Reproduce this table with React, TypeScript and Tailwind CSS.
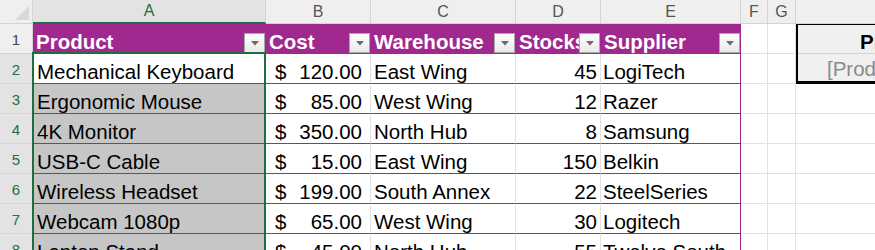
import React from "react";

const GREEN = "#1d6f42";

const cols = ["A", "B", "C", "D", "E", "F", "G", ""];

const rows = [
  ["Mechanical Keyboard", "120.00", "East Wing", "45", "LogiTech"],
  ["Ergonomic Mouse", "85.00", "West Wing", "12", "Razer"],
  ["4K Monitor", "350.00", "North Hub", "8", "Samsung"],
  ["USB-C Cable", "15.00", "East Wing", "150", "Belkin"],
  ["Wireless Headset", "199.00", "South Annex", "22", "SteelSeries"],
  ["Webcam 1080p", "65.00", "West Wing", "30", "Logitech"],
  ["Laptop Stand", "45.00", "North Hub", "55", "Twelve South"],
];

function FilterBtn() {
  return (
    <div className="absolute right-0 bottom-0 w-[21px] h-[20px] border border-[#a8a8a8] bg-gradient-to-b from-white to-[#e9e9e9] flex items-center justify-center">
      <svg width="8" height="5" viewBox="0 0 8 5">
        <polygon points="0,0 8,0 4,4.5" fill="#6b6b6b" />
      </svg>
    </div>
  );
}

function HeaderCell({ label }: { label: string }) {
  return (
    <div className="relative flex items-end pl-[3px] bg-[#a0288f] border-b border-r border-[#a0288f] text-white font-bold text-[20.5px] leading-[23px] whitespace-nowrap overflow-hidden">
      <span>{label}</span>
      <FilterBtn />
    </div>
  );
}

export default function App() {
  return (
    <div
      className="relative w-[875px] h-[250px] overflow-hidden bg-white text-black"
      style={{ fontFamily: '"Liberation Sans", Arial, sans-serif' }}
    >
      <div className="grid grid-cols-[33px_233px_105px_145px_85px_140px_27px_28px_80px] grid-rows-[24px_repeat(8,30px)]">
        {/* corner */}
        <div className="bg-[#efefef] border-r border-b border-[#d4d4d4] flex items-end justify-end pr-[2px] pb-[2px]">
          <svg width="16" height="16" viewBox="0 0 16 16">
            <polygon points="15,1 15,15 1,15" fill="#d9d9d9" />
          </svg>
        </div>
        {/* column headers */}
        {cols.map((c, i) => (
          <div
            key={"ch" + i}
            className={`flex items-center justify-center text-[16px] leading-none border-r border-[#d4d4d4] ${
              i === 0
                ? "bg-[#e3e3e3] text-[#1d6f42] border-b-2 border-b-[#1d6f42]"
                : "bg-[#efefef] text-[#555555] border-b border-b-[#d4d4d4]"
            }`}
          >
            {c}
          </div>
        ))}

        {/* row 1 */}
        <div className="bg-[#efefef] border-r border-b border-[#d4d4d4] flex items-center justify-center text-[15px] text-[#444444] pt-[4px]">
          1
        </div>
        <HeaderCell label="Product" />
        <HeaderCell label="Cost" />
        <HeaderCell label="Warehouse" />
        <HeaderCell label="Stocks" />
        <HeaderCell label="Supplier" />
        <div className="border-r border-b border-[#e1e1e1]" />
        <div className="border-r border-b border-[#e1e1e1]" />
        {/* lookup box spanning rows 1-2 */}
        <div className="row-span-2 border-l-2 border-t border-b-[3px] border-black grid grid-rows-[29px_1fr] overflow-hidden">
          <div className="bg-[#f0f0f0] border-b border-[#d4d4d4] flex items-end pl-[62px] font-bold text-[20.5px] leading-[23px] whitespace-nowrap">
            Product Lookup
          </div>
          <div className="bg-[#f0f0f0] flex items-end pl-[29px] text-[20.5px] leading-[23px] text-[#8a8a8a] whitespace-nowrap pb-[1px]">
            [Product Name]
          </div>
        </div>

        {rows.map((r, idx) => {
          const rn = idx + 2;
          const cellText = "text-[20.5px] leading-[23px] whitespace-nowrap overflow-hidden flex items-end";
          return (
            <React.Fragment key={rn}>
              <div className="bg-[#e3e3e3] border-r border-b border-[#d4d4d4] flex items-center justify-center text-[15px] text-[#1d6f42] pt-[4px]">
                {rn}
              </div>
              <div
                className={`${cellText} pl-[4px] border-r border-r-[#e1e1e1] border-b border-b-[#a0288f] ${
                  idx === 0 ? "bg-white" : "bg-[#c6c6c6]"
                }`}
              >
                {r[0]}
              </div>
              <div className={`${cellText} justify-between pl-[9px] pr-[8px] border-r border-r-[#e1e1e1] border-b border-b-[#a0288f]`}>
                <span>$</span>
                <span>{r[1]}</span>
              </div>
              <div className={`${cellText} pl-[3px] border-r border-r-[#e1e1e1] border-b border-b-[#a0288f]`}>
                {r[2]}
              </div>
              <div className={`${cellText} justify-end pr-[3px] border-r border-r-[#e1e1e1] border-b border-b-[#a0288f]`}>
                {r[3]}
              </div>
              <div className={`${cellText} pl-[2px] border-r border-r-[#a0288f] border-b border-b-[#a0288f]`}>
                {r[4]}
              </div>
              <div className="border-r border-b border-[#e1e1e1]" />
              <div className="border-r border-b border-[#e1e1e1]" />
              {rn >= 3 ? <div className="border-r border-b border-[#e1e1e1]" /> : null}
            </React.Fragment>
          );
        })}
      </div>
      {/* selection outline */}
      <div
        className="absolute left-[32px] top-[52px] w-[234px] h-[220px] border-2 pointer-events-none"
        style={{ borderColor: GREEN }}
      />
    </div>
  );
}
